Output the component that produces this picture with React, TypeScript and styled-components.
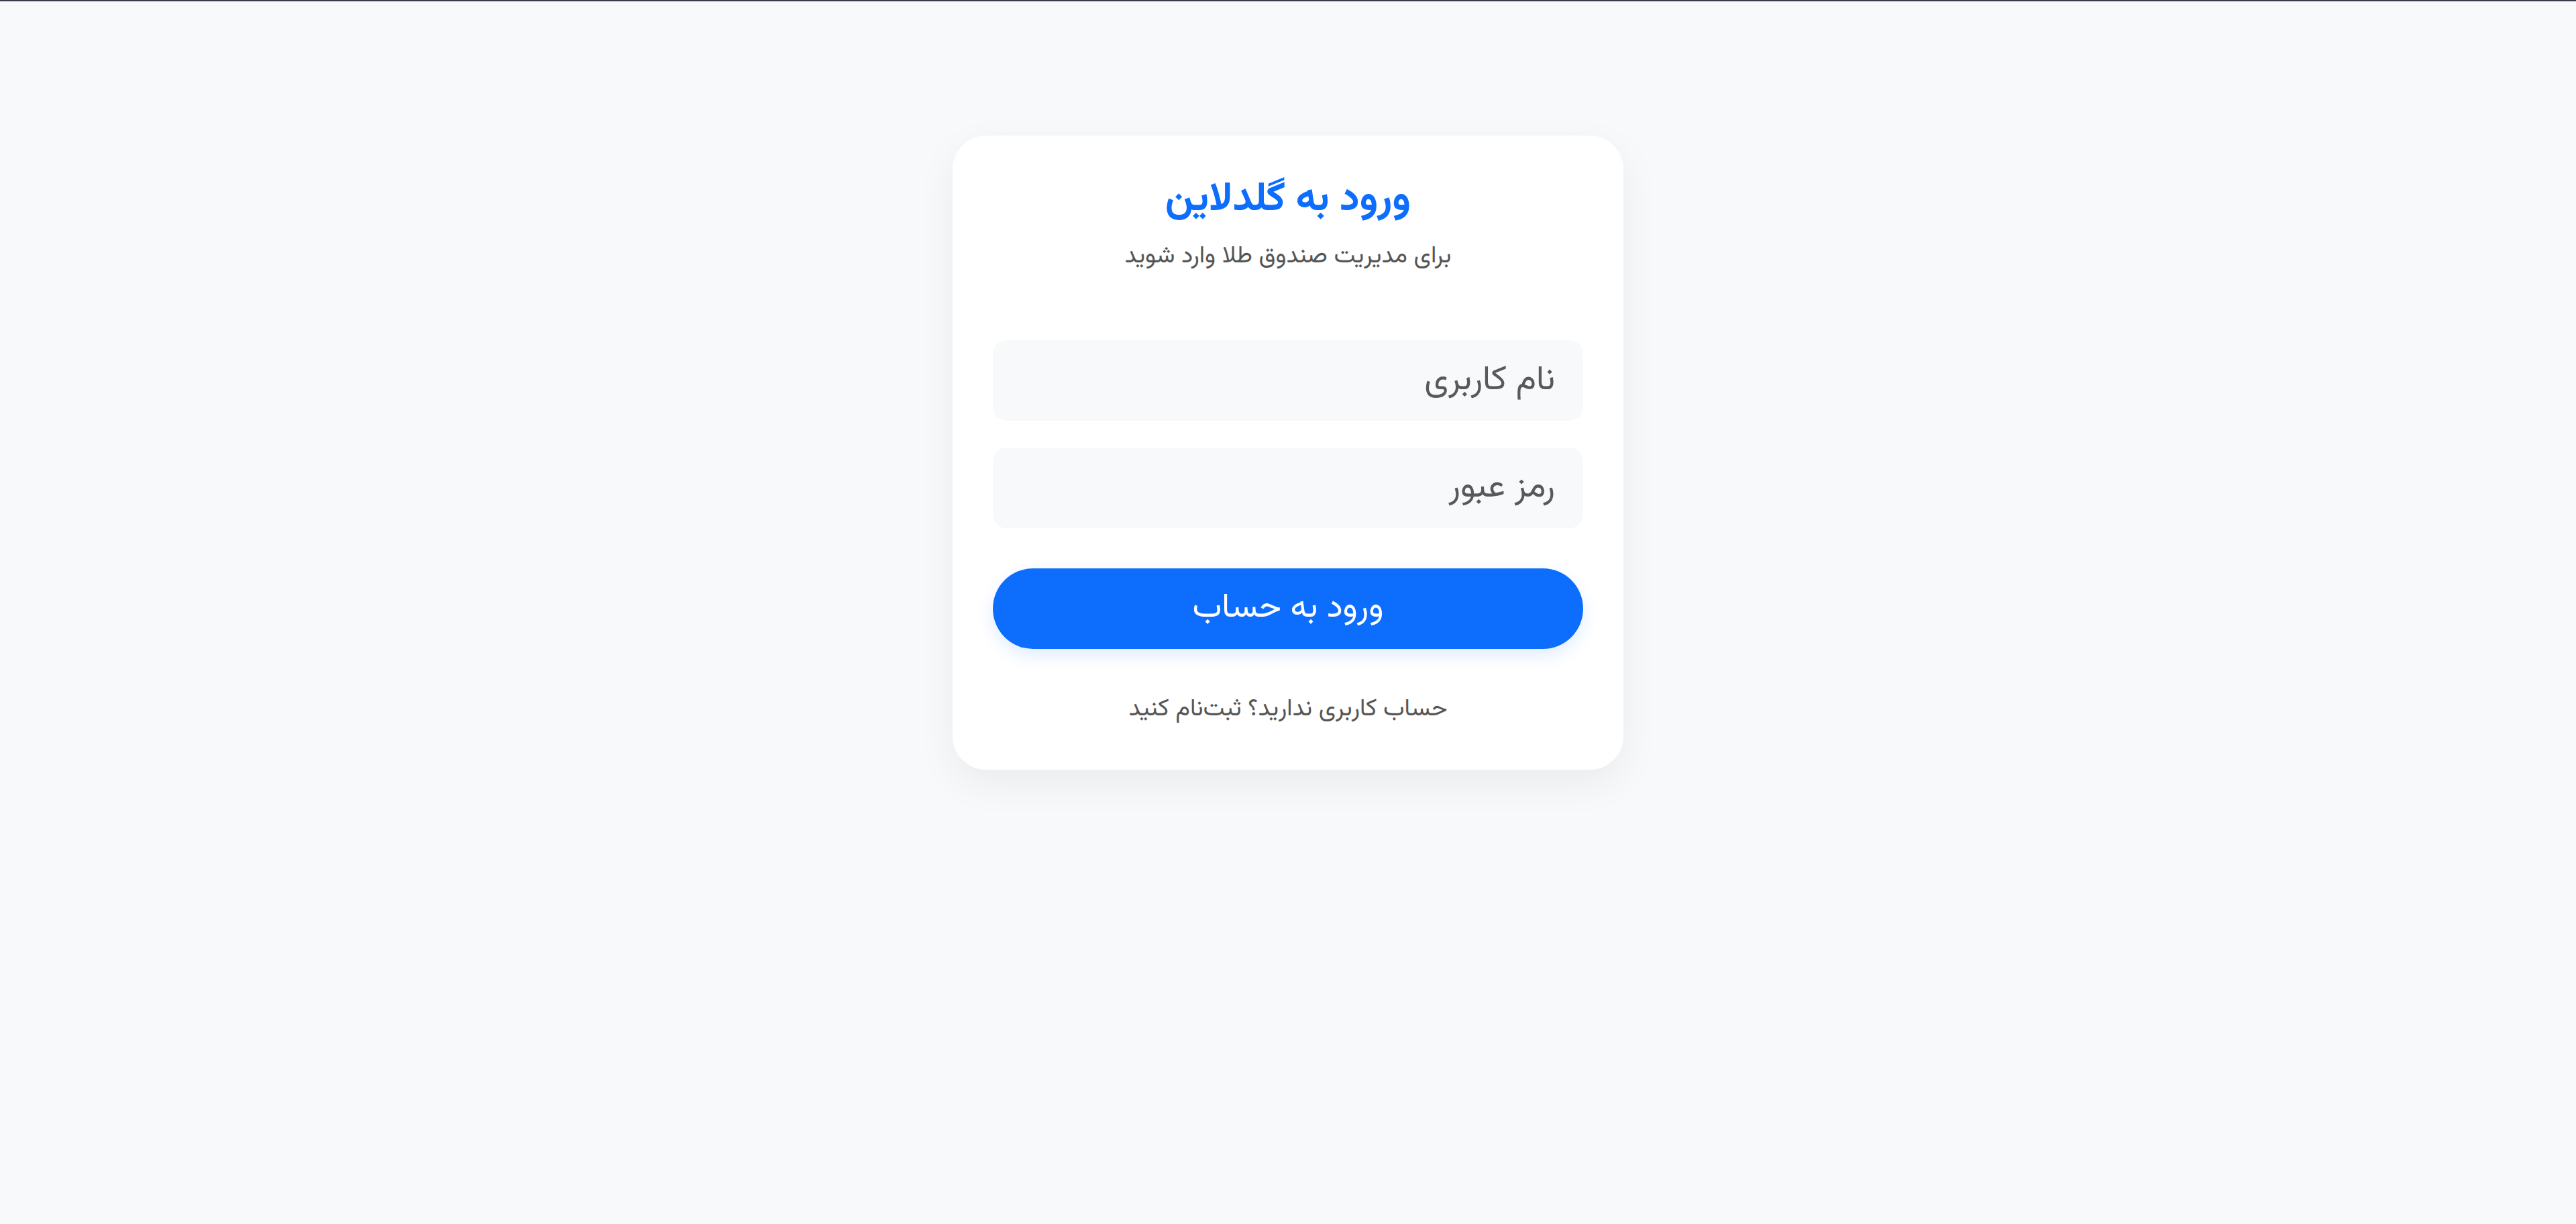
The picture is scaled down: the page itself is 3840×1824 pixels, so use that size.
import React from 'react'
import styled, { createGlobalStyle } from 'styled-components'

const GlobalStyle = createGlobalStyle`
  * {
    box-sizing: border-box;
  }
  html, body {
    margin: 0;
    padding: 0;
    background: #f8f9fa;
  }
  body {
    border-top: 2px solid #383d49;
    min-height: 1824px;
    font-family: "Vazirmatn", "DejaVu Sans", "Noto Sans", sans-serif;
    direction: rtl;
  }
`

export default function App() {
  return (
    <>
      <GlobalStyle />
      <Page>
        <Card>
          <Header>
            <Title>ورود به گلدلاین</Title>
            <Subtitle>برای مدیریت صندوق طلا وارد شوید</Subtitle>
          </Header>

          <Form onSubmit={(e) => e.preventDefault()}>
            <Input type="text" placeholder="نام کاربری" />
            <Input type="password" placeholder="رمز عبور" />
            <SubmitButton type="submit">ورود به حساب</SubmitButton>
          </Form>

          <Footer>حساب کاربری ندارید؟ ثبت‌نام کنید</Footer>
        </Card>
      </Page>
    </>
  )
}

const Page = styled.main`
  display: flex;
  justify-content: center;
  padding-top: 200px;
`
const Card = styled.section`
  width: 1000px;
  padding: 60px;
  background: #ffffff;
  border-radius: 50px;
  box-shadow: 0 20px 60px rgba(0, 0, 0, 0.06);
`
const Header = styled.header`
  text-align: center;
  margin-bottom: 95px;
`
const Title = styled.h1`
  margin: 0 0 18px;
  font-size: 60px;
  line-height: 72px;
  font-weight: 700;
  color: #0d6efd;
`
const Subtitle = styled.p`
  margin: 0;
  font-size: 36px;
  line-height: 60px;
  color: #555555;
`
const Form = styled.form`
  display: flex;
  flex-direction: column;
  gap: 40px;
`
const Input = styled.input`
  height: 120px;
  width: 100%;
  padding: 0 42px;
  border: none;
  border-radius: 20px;
  background: #f8f9fa;
  font-family: inherit;
  font-size: 51px;
  color: #333;
  direction: rtl;
  outline: none;

  &::placeholder {
    color: #595959;
  }
`
const SubmitButton = styled.button`
  margin-top: 20px;
  height: 120px;
  width: 100%;
  border: none;
  border-radius: 60px;
  background: #0d6efd;
  color: #ffffff;
  font-family: inherit;
  font-size: 50px;
  box-shadow: 0 10px 25px rgba(13, 110, 253, 0.12);
  cursor: pointer;
`
const Footer = styled.p`
  margin: 60px 0 0;
  text-align: center;
  font-size: 36px;
  line-height: 60px;
  color: #555555;
`
